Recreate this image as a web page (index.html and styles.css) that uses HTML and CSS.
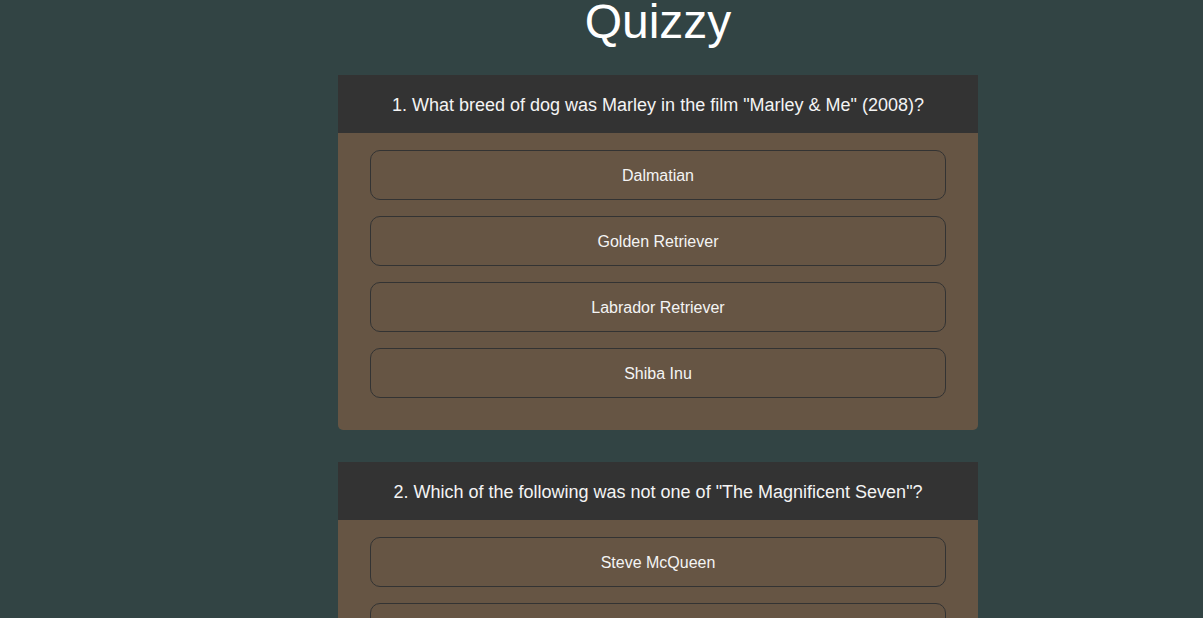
FILE: index.html
```html
<!DOCTYPE html>
<html>
<head>
<meta charset="utf-8">
<link rel="stylesheet" href="styles.css">
</head>
<body>
<div class="page">
<h1 class="title">Quizzy</h1>
<main class="quiz">
  <section class="card">
    <div class="question">1. What breed of dog was Marley in the film "Marley &amp; Me" (2008)?</div>
    <div class="answers">
      <button class="answer">Dalmatian</button>
      <button class="answer">Golden Retriever</button>
      <button class="answer">Labrador Retriever</button>
      <button class="answer">Shiba Inu</button>
    </div>
  </section>
  <section class="card">
    <div class="question">2. Which of the following was not one of "The Magnificent Seven"?</div>
    <div class="answers">
      <button class="answer">Steve McQueen</button>
      <button class="answer">Charles Bronson</button>
      <button class="answer">Robert Vaughn</button>
      <button class="answer">Clint Eastwood</button>
    </div>
  </section>
</main>
</div>
</body>
</html>
```
FILE: styles.css
```css
html, body {
  margin: 0;
  padding: 0;
  background: #324444;
  font-family: "Liberation Sans", Arial, sans-serif;
  color: #fff;
}
.page {
  padding-left: 113px;
}
.title {
  margin: 0;
  font-size: 48px;
  font-weight: normal;
  line-height: 44px;
  text-align: center;
  color: #fff;
}
.quiz {
  display: flex;
  flex-direction: column;
  align-items: center;
  gap: 32px;
  padding-top: 31px;
}
.card {
  width: 640px;
  background: #665544;
  border-radius: 0 0 5px 5px;
}
.question {
  background: #333333;
  height: 58px;
  box-sizing: border-box;
  padding-top: 2px;
  display: flex;
  align-items: center;
  justify-content: center;
  font-size: 18px;
  color: #f4f4f4;
}
.answers {
  display: flex;
  flex-direction: column;
  gap: 16px;
  padding: 17px 32px 32px;
}
.answer {
  font-family: "Liberation Sans", Arial, sans-serif;
  font-size: 16px;
  line-height: 18px;
  padding: 16px 15px 14px;
  background: transparent;
  border: 1px solid #333333;
  border-radius: 10px;
  color: #f4f4f4;
  text-align: center;
}
```
